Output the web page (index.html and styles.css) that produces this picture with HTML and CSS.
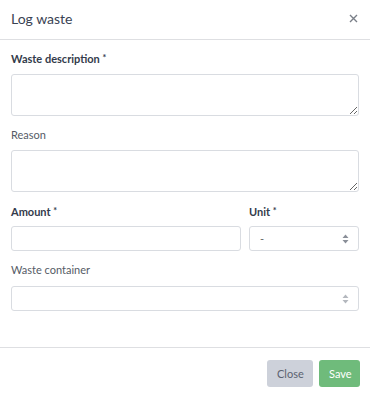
FILE: index.html
```html
<!DOCTYPE html>
<html lang="en">
<head>
  <meta charset="UTF-8" />
  <meta name="viewport" content="width=device-width, initial-scale=1.0" />
  <title>Log waste</title>
  <link rel="stylesheet" href="styles.css">
</head>
<body>
  <div class="modal">
    <div class="modal-header">
      <h2 class="modal-title">Log waste</h2>
      <button class="close-x" aria-label="Close">
        <svg width="9" height="9" viewBox="0 0 9 9"><path d="M1 1L8 8M8 1L1 8" stroke="#7a7f88" stroke-width="1.4"/></svg>
      </button>
    </div>
    <div class="modal-body">
      <div class="field">
        <label class="label required">Waste description <span>*</span></label>
        <textarea class="input area"></textarea>
      </div>
      <div class="field">
        <label class="label">Reason</label>
        <textarea class="input area"></textarea>
      </div>
      <div class="row">
        <div class="field grow">
          <label class="label required">Amount <span>*</span></label>
          <input class="input" type="text">
        </div>
        <div class="field unit">
          <label class="label required">Unit <span>*</span></label>
          <div class="select-wrap">
            <select class="input select"><option>-</option></select>
            <svg class="arrows" width="7" height="10" viewBox="0 0 7 10"><path d="M3.5 0.5L6.5 4H0.5Z M3.5 9.5L6.5 6H0.5Z" fill="#8a8f98"/></svg>
          </div>
        </div>
      </div>
      <div class="field container">
        <label class="label">Waste container</label>
        <div class="select-wrap">
          <select class="input select"><option></option></select>
          <svg class="arrows light" width="7" height="10" viewBox="0 0 7 10"><path d="M3.5 0.5L6.5 4H0.5Z M3.5 9.5L6.5 6H0.5Z" fill="#b4b8be"/></svg>
        </div>
      </div>
    </div>
    <div class="modal-footer">
      <button class="btn btn-close">Close</button>
      <button class="btn btn-save">Save</button>
    </div>
  </div>
</body>
</html>
```

FILE: styles.css
```css
* {
  box-sizing: border-box;
}
body {
  margin: 0;
  font-family: Lato, "Noto Sans", sans-serif;
  background: #fff;
  color: #3c4454;
}
.modal {
  width: 370px;
}
.modal-header {
  height: 40px;
  display: flex;
  align-items: center;
  justify-content: space-between;
  padding: 0 11px 2px 11px;
  border-bottom: 1px solid #dedfe2;
}
.modal-title {
  margin: 0;
  font-size: 14px;
  font-weight: 400;
  color: #3a4353;
}
.close-x {
  border: none;
  background: none;
  padding: 0;
  margin-right: 1px;
  display: flex;
  cursor: pointer;
}
.modal-body {
  padding: 10px 11px 36px 11px;
}
.field {
  display: flex;
  flex-direction: column;
  margin-bottom: 11px;
}
.field:last-child {
  margin-bottom: 0;
}
.label {
  font-size: 11px;
  line-height: 16px;
  color: #555b66;
  margin-bottom: 7px;
}
.label.required {
  font-weight: 700;
  color: #333b4b;
}
.label span {
  font-size: 9px;
  vertical-align: 2px;
}
.container .label {
  margin-bottom: 8px;
}
.input {
  width: 100%;
  height: 25px;
  border: 1px solid #d9dce1;
  border-radius: 3px;
  background: #fff;
  font-family: inherit;
  font-size: 11px;
  color: #666;
  padding: 0 10px;
  outline: none;
}
.area {
  height: 42px;
  resize: vertical;
  display: block;
}
.row {
  display: flex;
  gap: 8px;
  margin-bottom: 11px;
}
.row .field {
  margin-bottom: 0;
}
.row .label {
  margin-bottom: 6px;
}
.grow {
  flex: 1;
}
.unit {
  width: 110px;
}
.select-wrap {
  position: relative;
}
.select {
  appearance: none;
  -webkit-appearance: none;
  display: block;
}
.arrows {
  position: absolute;
  right: 10px;
  top: 8px;
  pointer-events: none;
}
.modal-footer {
  border-top: 1px solid #dedfe2;
  display: flex;
  justify-content: flex-end;
  gap: 6px;
  padding: 12px 10px 10px 11px;
}
.btn {
  height: 27px;
  border: none;
  border-radius: 3px;
  font-family: inherit;
  font-size: 11px;
  padding: 0 10px;
  cursor: pointer;
}
.btn-close {
  background: #cdd1da;
  color: #5b6270;
  width: 46px;
}
.btn-save {
  background: #6fbb7b;
  color: #fff;
  width: 41px;
}
```
